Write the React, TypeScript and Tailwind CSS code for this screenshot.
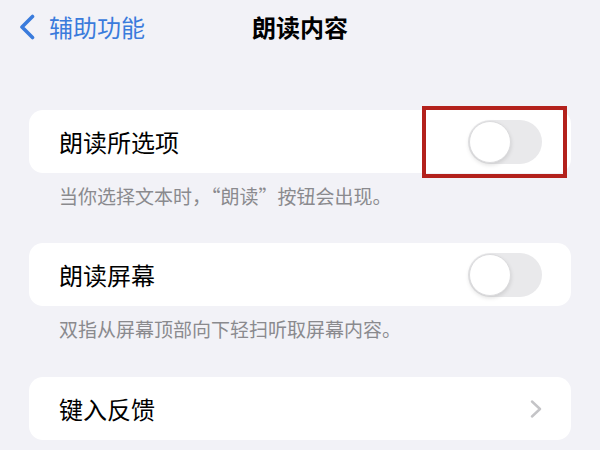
import React from "react";

const font = { fontFamily: '"Noto Sans CJK SC", "Noto Sans", sans-serif' };

function Toggle() {
  return (
    <div className="w-[74px] h-[44px] rounded-full bg-[#e9e9eb] p-[1px] flex items-center">
      <div className="w-[42px] h-[42px] rounded-full bg-white border border-[#dcdcde] shadow-[0_2px_4px_rgba(0,0,0,0.12)]" />
    </div>
  );
}

function Chevron() {
  return (
    <svg width="12" height="18" viewBox="0 0 12 18" fill="none">
      <polyline points="2,1.5 10,9 2,16.5" stroke="#c4c4c7" strokeWidth="2.4" strokeLinecap="round" strokeLinejoin="round" />
    </svg>
  );
}

export default function App() {
  return (
    <div className="w-[600px] h-[450px] overflow-hidden bg-[#f2f2f7] text-black" style={font}>
      {/* Nav bar */}
      <div className="h-[54px] grid grid-cols-[1fr_auto_1fr] items-center">
        <div className="flex items-center pl-[18px] gap-[13px] text-[#3a7bdc]">
          <svg width="18" height="26" viewBox="0 0 18 26" fill="none">
            <polyline points="14.5,2.5 4,13 14.5,23.5" stroke="#3a7bdc" strokeWidth="3.6" strokeLinecap="round" strokeLinejoin="round" />
          </svg>
          <span className="text-[24px] leading-[30px]">辅助功能</span>
        </div>
        <div className="text-[24px] leading-[30px] font-semibold">朗读内容</div>
        <div />
      </div>

      <div className="mt-[56px] mx-[29px]">
        {/* Card 1 */}
        <div className="relative h-[63px] bg-white rounded-[14px] flex items-center justify-between pl-[30px] pr-[29px]">
          <span className="text-[24px] leading-[30px]">朗读所选项</span>
          <Toggle />
          <div className="absolute top-[-4px] left-[393px] w-[145px] h-[72px] border-[4px] border-[#b3211c]" />
        </div>
        <p className="pt-[10px] pl-[30px] text-[19px] leading-[26px] text-[#8a8a8e] mb-[34px]">
          当你选择文本时，“朗读”按钮会出现。
        </p>

        {/* Card 2 */}
        <div className="h-[63px] bg-white rounded-[14px] flex items-center justify-between pl-[30px] pr-[29px]">
          <span className="text-[24px] leading-[30px]">朗读屏幕</span>
          <Toggle />
        </div>
        <p className="pt-[10px] pl-[30px] text-[19px] leading-[26px] text-[#8a8a8e] mb-[35px]">
          双指从屏幕顶部向下轻扫听取屏幕内容。
        </p>

        {/* Card 3 */}
        <div className="h-[63px] bg-white rounded-[14px] flex items-center justify-between pl-[30px] pr-[29px]">
          <span className="text-[24px] leading-[30px]">键入反馈</span>
          <Chevron />
        </div>
      </div>
    </div>
  );
}
